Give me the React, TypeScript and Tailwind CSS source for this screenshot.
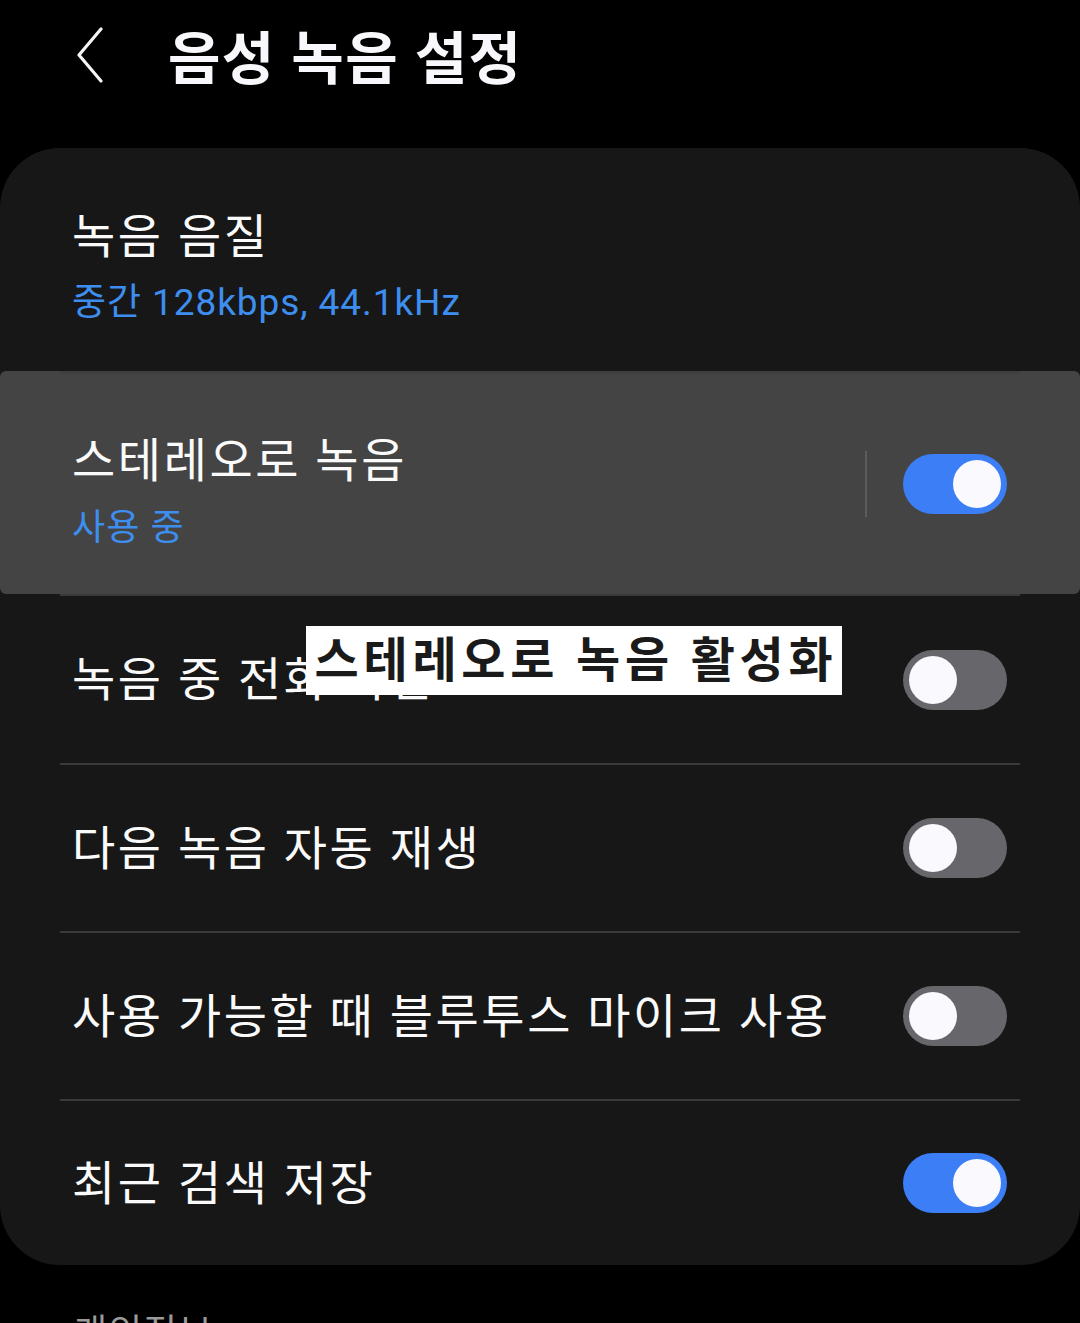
import React from 'react'

function Toggle({ on }: { on: boolean }) {
    return (
        <div
            className={
                on
                    ? 'w-[104px] h-[60px] rounded-full bg-[#3b7ef6] flex items-center justify-end px-[6px] shrink-0'
                    : 'w-[104px] h-[60px] rounded-full bg-[#66666b] flex items-center justify-start px-[6px] shrink-0'
            }
        >
            <div className="w-[48px] h-[48px] rounded-full bg-[#fafafe]"></div>
        </div>
    )
}

function Divider() {
    return <div className="mx-[60px] h-[2px] bg-[#3a3a3a]"></div>
}

function SwitchRow({ title, on, height }: { title: string; on: boolean; height: string }) {
    return (
        <div className={`${height} flex items-center justify-between pl-[72px] pr-[73px]`}>
            <div className="text-[47px] leading-none text-[#fafafa] tracking-[0.055em]">{title}</div>
            <Toggle on={on} />
        </div>
    )
}

export default function App() {
    return (
        <div className="relative w-[1080px] h-[1323px] overflow-hidden bg-black font-['Roboto','Noto_Sans_CJK_KR',sans-serif]">
            {/* Header */}
            <div className="h-[110px] mb-[38px] flex items-center pl-[76px]">
                <svg width="28" height="56" viewBox="0 0 28 56" fill="none">
                    <path d="M25 2 L3 28 L25 54" stroke="#f5f5f7" strokeWidth="3.2" strokeLinecap="round" strokeLinejoin="round" />
                </svg>
                <h1 className="ml-[64px] pt-[8px] text-[57px] font-bold leading-none text-[#f8f8fc] tracking-[0.025em]">음성 녹음 설정</h1>
            </div>

            {/* Settings card */}
            <div className="rounded-[60px] bg-[#171717]">
                <div className="h-[223px] flex flex-col justify-center pl-[72px] pt-[14px]">
                    <div className="text-[47px] leading-none text-[#fafafa] tracking-[0.055em]">녹음 음질</div>
                    <div className="mt-[24px] text-[37px] leading-none text-[#3e8ef0] tracking-[0.025em]">중간 128kbps, 44.1kHz</div>
                </div>

                <div className="h-[223px] rounded-[6px] bg-[#444444] flex flex-col">
                    <div className="mx-[60px] h-[3px] bg-[#3e3e3e]"></div>
                    <div className="flex-1 flex items-center justify-between pl-[72px] pr-[73px]">
                        <div className="flex flex-col pt-[14px]">
                            <div className="text-[47px] leading-none text-[#fafafa] tracking-[0.055em]">스테레오로 녹음</div>
                            <div className="mt-[26px] text-[36px] leading-none text-[#3e8ef0] tracking-[0.03em]">사용 중</div>
                        </div>
                        <div className="flex items-center">
                            <div className="w-[2px] h-[66px] bg-[#5c5c5c] mr-[36px]"></div>
                            <Toggle on={true} />
                        </div>
                    </div>
                </div>
                <div className="mx-[60px] h-[2px] bg-[#3a3a3a]"></div>

                <SwitchRow title="녹음 중 전화 차단" on={false} height="h-[167px]" />
                <Divider />
                <SwitchRow title="다음 녹음 자동 재생" on={false} height="h-[166px]" />
                <Divider />
                <SwitchRow title="사용 가능할 때 블루투스 마이크 사용" on={false} height="h-[166px]" />
                <Divider />
                <SwitchRow title="최근 검색 저장" on={true} height="h-[164px]" />
            </div>

            <div className="mt-[50px] pl-[74px] text-[36px] leading-none text-[#9a9a9a] tracking-[0.05em]">개인정보</div>

            {/* Tooltip overlay */}
            <div className="absolute left-[306px] top-[626px] w-[536px] h-[69px] bg-white flex items-center justify-center">
                <span className="text-[48px] font-bold leading-none text-[#1a1a1a] tracking-[0.1em] pl-[4px]">스테레오로 녹음 활성화</span>
            </div>
        </div>
    )
}
